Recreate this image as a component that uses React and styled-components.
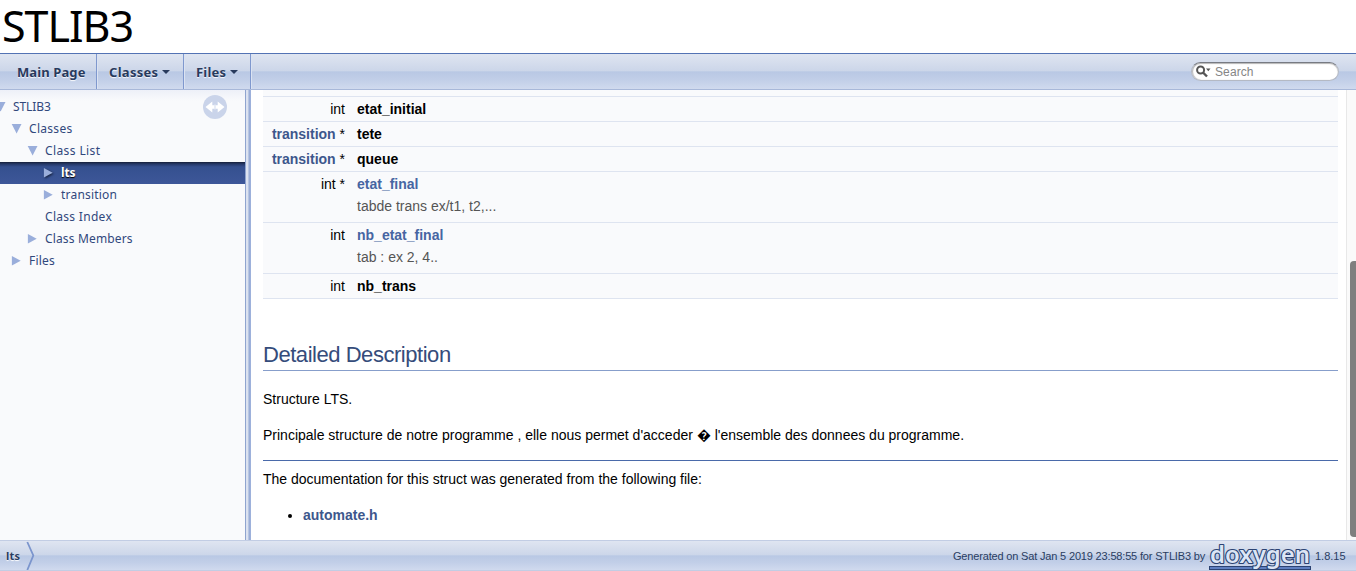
import React from "react";
import styled, { createGlobalStyle } from "styled-components";

const lucida = '"Noto Sans", "Open Sans", sans-serif';
const helvetica = '"Liberation Sans", Arial, sans-serif';
const barFill =
  "linear-gradient(#dfe5f1 0%, #ccd6e9 48%, #b9c8e4 51%, #c2cfe8 75%, #d0daee 100%)";

const GlobalStyle = createGlobalStyle`
  * { box-sizing: border-box; }
  body { margin: 0; background: #fff; color: #000; overflow: hidden; font: 14px/22px ${helvetica}; }
  a { text-decoration: none; color: #3d578c; font-weight: bold; }
`;

const Page = styled.div`
  display: flex;
  flex-direction: column;
  width: 1356px;
  height: 571px;
  overflow: hidden;
`;

const Title = styled.header`
  height: 53px;
  padding-left: 2px;
  font: 43px/52px ${lucida};
  letter-spacing: ${(p) => p.$spacing}px;
  white-space: nowrap;
`;

const NavBar = styled.nav`
  display: flex;
  height: 37px;
  border-top: 1px solid #5373b4;
  border-bottom: 1px solid #a8b8d9;
  background: ${barFill};
`;

const Tab = styled.a`
  && { color: #283a5d; }
  display: flex;
  align-items: center;
  width: ${(p) => p.$width}px;
  padding-left: ${(p) => p.$pad}px;
  padding-top: 1px;
  border-right: 1px solid #7f98ce;
  box-shadow: 1px 0 0 #dbe3f2;
  font: bold 13px/35px ${lucida};
  letter-spacing: ${(p) => p.$spacing}px;
  white-space: nowrap;
  text-shadow: 0 1px 1px rgba(255, 255, 255, 0.9);
`;

const Caret = styled.i`
  margin: 0 0 0 4px;
  border: 4px solid transparent;
  border-top-color: #283a5d;
  border-bottom: 0;
`;

const SearchBox = styled.div`
  display: flex;
  align-items: center;
  width: 148px;
  height: 19px;
  margin: 8px 17px 0 auto;
  padding-left: 4px;
  border: 1px solid #b4b9c4;
  border-top: 1px solid #777a82;
  border-radius: 10px;
  background: #fff;
  box-shadow: inset 0 1px 1px #b5b5b5, inset 1px 0 1px #bbb;
  color: #858585;
  font: 12px/16px ${helvetica};
  letter-spacing: 0.1px;
`;

const SearchIcon = styled.svg`
  width: 15px;
  height: 13px;
  margin-right: 4px;
`;

const Body = styled.div`
  display: flex;
  flex: 1;
  min-height: 0;
`;

const Sidebar = styled.aside`
  position: relative;
  width: 245px;
  padding-top: 6px;
  background: linear-gradient(#edf0f8 0, #f9fafc 11px);
`;

const SyncButton = styled.svg`
  position: absolute;
  top: 5px;
  left: 203px;
  width: 24px;
  height: 24px;
`;

const TreeRow = styled.div`
  display: flex;
  align-items: center;
  height: 22px;
  padding-left: ${(p) => p.$depth * 16 - 7}px;
  background: ${(p) =>
    p.$selected ? "linear-gradient(#161f38 0, #253868 2px, #35508f 5px, #3d5799 100%)" : "none"};
  color: ${(p) => (p.$selected ? "#fff" : "#31487c")};
  text-shadow: ${(p) => (p.$selected ? "0 1px 1px #000" : "none")};
  font: ${(p) => (p.$selected ? "bold " : "")}12px/22px ${lucida};
  letter-spacing: ${(p) => p.$spacing || 0}px;
  white-space: nowrap;
`;

const Arrow = styled.svg`
  flex: none;
  width: 16px;
  height: 22px;
  margin-left: ${(p) => p.$shift || 0}px;
  margin-right: 4px;
  filter: ${(p) => (p.$selected ? "drop-shadow(1px 1px 1px #14203c)" : "none")};
`;

const Splitter = styled.div`
  width: 6px;
  background: linear-gradient(90deg, #8fa4cf 0 1px, #dce2f0 1px 3px, #b7c5e1 3px 4px, #9baed8 4px 5px, #9db1db 5px);
`;

const Content = styled.main`
  flex: 1;
  padding: 0 8px 0 12px;
`;

const Members = styled.div`
  background: #f9fafc;
  border-bottom: 1px solid #dee4f0;
  margin-bottom: 38px;
`;

const Leftover = styled.div`
  height: 6px;
`;

const Member = styled.div`
  display: grid;
  grid-template-columns: 82px 1fr;
  column-gap: 12px;
  align-content: start;
  height: ${(p) => (p.$tall ? 51 : 25)}px;
  padding-top: 1px;
  border-top: 1px solid #dee4f0;
`;

const MemberType = styled.div`
  text-align: right;
  white-space: nowrap;
`;

const MemberName = styled.div`
  font-weight: bold;
  a { color: #4665a2; }
`;

const MemberNote = styled.div`
  grid-column: 2;
  color: #555;
`;

const Heading = styled.h2`
  height: 34px;
  margin: 0 0 17px;
  border-bottom: 1px solid #879ecb;
  color: #354c7b;
  font: 22px/35px ${helvetica};
  letter-spacing: ${(p) => p.$spacing}px;
`;

const Paragraph = styled.p`
  margin: 0 0 14px;
  white-space: nowrap;
`;

const Rule = styled.hr`
  height: 1px;
  margin: 0 0 7px;
  border: 0;
  background: #4a6aaa;
`;

const FileList = styled.ul`
  margin: 0;
  padding-left: 40px;
`;

const ScrollTrack = styled.div`
  width: 10px;
  padding: 171px 0 0 3px;
  background: #fafafa;
  border-left: 1px solid #e8e8e8;
  overflow: hidden;
`;

const ScrollThumb = styled.div`
  width: 9px;
  height: 276px;
  border-radius: 4px;
  background: #7f7f7f;
`;

const Footer = styled.footer`
  display: flex;
  align-items: center;
  height: 31px;
  border-top: 1px solid #c2cde4;
  border-bottom: 1px solid #c2cde4;
  background: ${barFill};
  color: #2a3d61;
  font: 11px/30px ${helvetica};
`;

const Crumb = styled.span`
  width: 26px;
  padding-left: 6px;
  font: bold 11px/28px ${lucida};
  letter-spacing: 0.2px;
  text-shadow: 0 1px 1px #fff;
`;

const Chevron = styled.svg`
  width: 10px;
  height: 29px;
`;

const Generated = styled.span`
  margin-left: auto;
  letter-spacing: ${(p) => p.$spacing}px;
  white-space: nowrap;
`;

const Logo = styled.svg`
  width: 104px;
  height: 29px;
  margin: 0 3px 0 3px;
`;

const Version = styled.span`
  width: 41px;
`;

const tree = [
  { label: "STLIB3", depth: 0, state: "open", spacing: -0.1 },
  { label: "Classes", depth: 1, state: "open" },
  { label: "Class List", depth: 2, state: "open", spacing: 0.4 },
  { label: "lts", depth: 3, state: "closed", selected: true, spacing: -0.2 },
  { label: "transition", depth: 3, state: "closed", spacing: 0.2 },
  { label: "Class Index", depth: 2, state: "leaf" },
  { label: "Class Members", depth: 2, state: "closed", spacing: 0.15 },
  { label: "Files", depth: 1, state: "closed", spacing: 0.2 },
];

const members = [
  { type: "int", name: "etat_initial" },
  { link: "transition", type: " *", name: "tete" },
  { link: "transition", type: " *", name: "queue" },
  { type: "int *", name: "etat_final", note: "tabde trans ex/t1, t2,..." },
  { type: "int", name: "nb_etat_final", note: "tab : ex 2, 4.." },
  { type: "int", name: "nb_trans" },
];

function TreeItem({ item }) {
  return (
    <TreeRow
      $depth={item.depth || 0.4375}
      $selected={item.selected}
      $spacing={item.spacing ?? 0.3}
    >
      <Arrow $selected={item.selected} $shift={item.depth ? 0 : -7} viewBox="0 0 16 22">
        {item.state === "open" && <path d="M2.700 6h9.800L7.600 15.500z" fill="#9aaedb" />}
        {item.state === "closed" && <path d="M2.900 6v9.600L11.700 10.800z" fill="#9aaedb" />}
      </Arrow>
      {item.label}
    </TreeRow>
  );
}

export default function App() {
  return (
    <Page>
      <GlobalStyle />
      <Title $spacing={-1}>STLIB3</Title>
      <NavBar>
        <Tab $width={97} $pad={17} $spacing={0.1}>Main Page</Tab>
        <Tab $width={87} $pad={12} $spacing={0.3}>Classes<Caret /></Tab>
        <Tab $width={67} $pad={12} $spacing={0.2}>Files<Caret /></Tab>
        <SearchBox>
          <SearchIcon viewBox="0 0 15 13">
            <circle cx="4.600" cy="5" r="3.500" fill="none" stroke="#555" strokeWidth="2" />
            <path d="M7 7.500l4 4" stroke="#555" strokeWidth="2.400" />
            <path d="M10 3.500h4.500l-2.200 2.800z" fill="#555" />
          </SearchIcon>
          Search
        </SearchBox>
      </NavBar>
      <Body>
        <Sidebar>
          {tree.map((item) => <TreeItem key={item.label} item={item} />)}
          <SyncButton viewBox="0 0 24 24">
            <circle cx="12" cy="12" r="12" fill="#cad4ea" />
            <path d="M2.500 12l6.800-5.500v3.700h5.400V6.500l6.800 5.500-6.800 5.500v-3.700H9.300v3.700z" fill="#fff" />
            <path d="M11.200 9.500h1.600v5h-1.600z" fill="#e3e9f5" />
          </SyncButton>
        </Sidebar>
        <Splitter />
        <Content>
          <Members>
            <Leftover />
            {members.map((m) => (
              <Member key={m.name} $tall={!!m.note}>
                <MemberType>{m.link && <a>{m.link}</a>}{m.type}</MemberType>
                <MemberName>{m.note ? <a>{m.name}</a> : m.name}</MemberName>
                {m.note && <MemberNote>{m.note}</MemberNote>}
              </Member>
            ))}
          </Members>
          <Heading $spacing={-0.46}>Detailed Description</Heading>
          <Paragraph>Structure LTS.</Paragraph>
          <Paragraph>
            Principale structure de notre programme , elle nous permet d'acceder {"\uFFFD"} l'ensemble des donnees du programme.
          </Paragraph>
          <Rule />
          <Paragraph>The documentation for this struct was generated from the following file:</Paragraph>
          <FileList>
            <li><a>automate.h</a></li>
          </FileList>
        </Content>
        <ScrollTrack><ScrollThumb /></ScrollTrack>
      </Body>
      <Footer>
        <Crumb>lts</Crumb>
        <Chevron viewBox="0 0 10 29">
          <path d="M1.300 1L7.300 14.500 1.300 29" fill="none" stroke="#7b95cd" strokeWidth="1.800" />
        </Chevron>
        <Generated $spacing={-0.17}>Generated on Sat Jan 5 2019 23:58:55 for STLIB3 by</Generated>
        <Logo viewBox="0 0 104 29">
          <rect x="1.500" y="25.500" width="101" height="3" fill="#5f7fc0" stroke="#2c4373" />
          <text
            x="2" y="22" textLength="100" lengthAdjust="spacingAndGlyphs"
            fontFamily="Noto Sans, sans-serif" fontWeight="600" fontSize="23"
            fill="#dce5f5" stroke="#2c4373" strokeWidth="2.200" strokeLinejoin="round" paintOrder="stroke"
          >doxygen</text>
        </Logo>
        <Version>1.8.15</Version>
      </Footer>
    </Page>
  );
}
